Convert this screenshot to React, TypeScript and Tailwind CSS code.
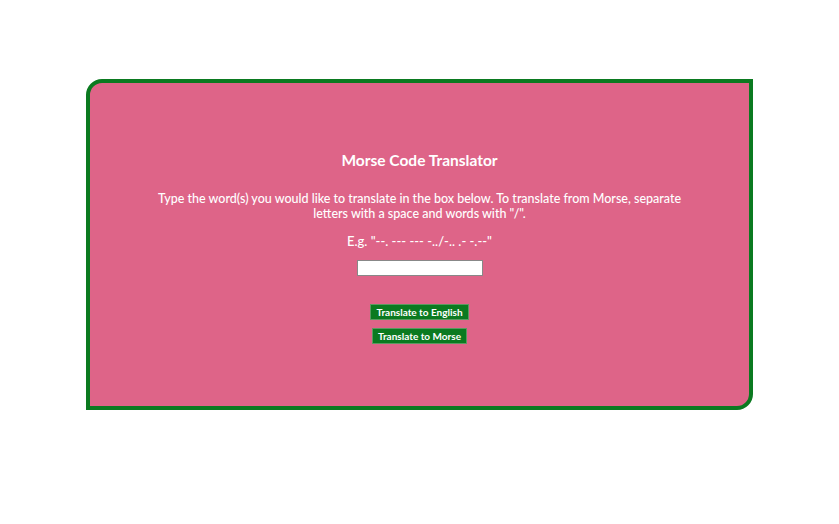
export default function App() {
  return (
    <div className="min-h-[524px] bg-white pt-[79px] font-['Lato','Open_Sans',sans-serif]">
      <div className="mx-auto w-[667px] h-[331px] bg-[#de6488] border-[4px] border-[#0b7a20] rounded-tl-[16px] rounded-br-[16px] text-center text-white pt-[67px]">
        <h1 className="text-[15.5px] font-bold leading-[20px]">Morse Code Translator</h1>
        <p className="mt-[21px] mx-auto w-[540px] text-[12.5px] leading-[15px] font-medium">
          Type the word(s) you would like to translate in the box below. To translate from Morse, separate letters with a space and words with "/".
        </p>
        <p className="mt-[13px] text-[13px] leading-[15px] font-medium">E.g. "--. --- --- -../-.. .- -.--"</p>
        <input
          type="text"
          className="mt-[11px] w-[126px] h-[16px] bg-white border border-[#888] align-top"
        />
        <div className="mt-[28px] flex flex-col items-center gap-[8px]">
          <button className="h-[16px] px-[5px] bg-[#0b7a20] border border-[#5a9a60] text-[10px] font-bold leading-[14px]">
            Translate to English
          </button>
          <button className="h-[16px] px-[5px] bg-[#0b7a20] border border-[#5a9a60] text-[10px] font-bold leading-[14px]">
            Translate to Morse
          </button>
        </div>
      </div>
    </div>
  );
}
